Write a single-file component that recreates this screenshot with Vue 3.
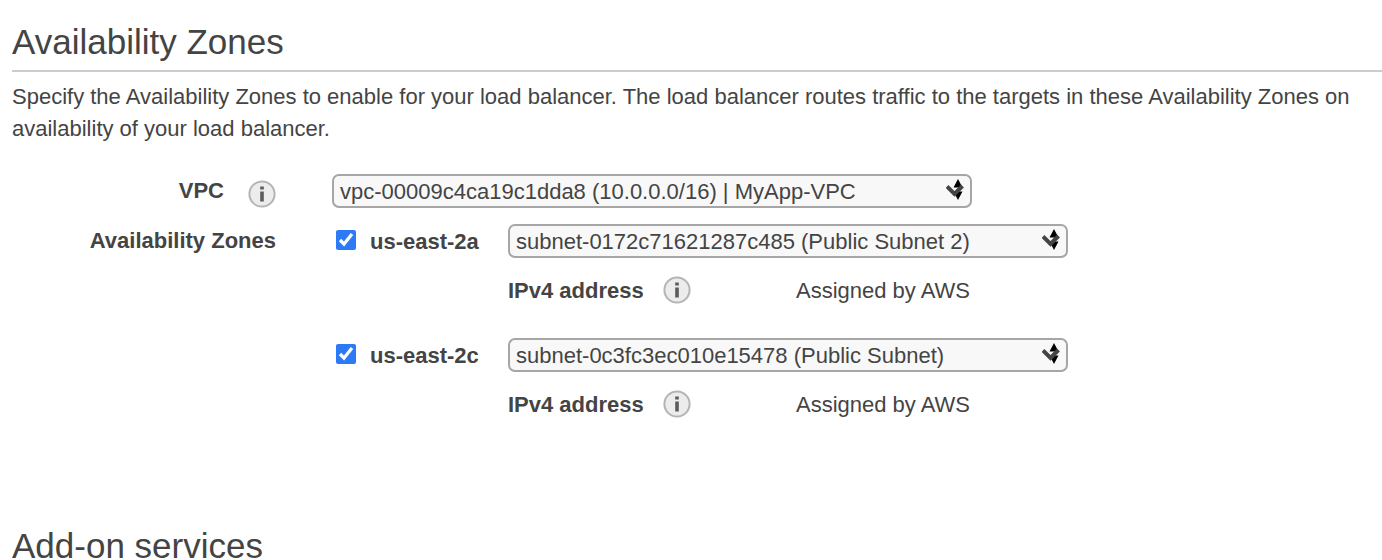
<script setup>
import { ref } from 'vue'

const vpc = ref('vpc-00009c4ca19c1dda8 (10.0.0.0/16) | MyApp-VPC')
const zones = ref([
  { name: 'us-east-2a', enabled: true, subnet: 'subnet-0172c71621287c485 (Public Subnet 2)' },
  { name: 'us-east-2c', enabled: true, subnet: 'subnet-0c3fc3ec010e15478 (Public Subnet)' }
])
</script>

<template>
  <main class="page">
    <section>
      <h2>Availability Zones</h2>
      <p class="intro">
        Specify the Availability Zones to enable for your load balancer. The load balancer routes traffic to the targets in these Availability Zones on<br>availability of your load balancer.
      </p>

      <div class="form">
        <div class="heading vpc-heading">
          <label for="vpc">VPC</label>
          <button class="info" type="button" aria-label="About VPC">
            <svg viewBox="0 0 28 28"><circle cx="14" cy="14" r="12.6" /><path d="M12.2 6.6h3.6v3h-3.6zM12.2 11.4h3.6v10h-3.6z" /></svg>
          </button>
        </div>
        <div class="picker vpc-picker">
          <select id="vpc" v-model="vpc"><option>{{ vpc }}</option></select>
          <svg class="arrows" viewBox="0 0 20 22"><path d="M12 0l4.5 8.5h-9zM12 21l4.5-8.500h-9z" /><path class="tick" d="M1 7.500l7.500 7.500 8-8" /></svg>
        </div>

        <div class="heading">Availability Zones</div>
        <div class="zones">
          <div v-for="zone in zones" :key="zone.name" class="zone">
            <label class="zone-name">
              <input v-model="zone.enabled" type="checkbox">
              <span>{{ zone.name }}</span>
            </label>
            <div class="picker subnet-picker">
              <select v-model="zone.subnet" :aria-label="zone.name"><option>{{ zone.subnet }}</option></select>
              <svg class="arrows" viewBox="0 0 20 22"><path d="M12 0l4.5 8.5h-9zM12 21l4.5-8.500h-9z" /><path class="tick" d="M1 7.500l7.500 7.500 8-8" /></svg>
            </div>
            <div class="address">
              <strong>IPv4 address</strong>
              <button class="info" type="button" aria-label="About IPv4 address">
                <svg viewBox="0 0 28 28"><circle cx="14" cy="14" r="12.6" /><path d="M12.2 6.6h3.6v3h-3.6zM12.2 11.4h3.6v10h-3.6z" /></svg>
              </button>
              <span class="assigned">Assigned by AWS</span>
            </div>
          </div>
        </div>
      </div>
    </section>
    <section class="addons">
      <h2>Add-on services</h2>
    </section>
  </main>
</template>

<style>
body { margin: 0; background: #fff; }
html { overflow: hidden; }
</style>

<style scoped>
.page {
  padding: 20px 0 0 12px;
  color: #444;
  font: 22px/32px "Liberation Sans", Arial, sans-serif;
}
h2 {
  margin: 0;
  padding-bottom: 6px;
  border-bottom: 2px solid #ccc;
  font-size: 35px;
  line-height: 44px;
  font-weight: 400;
}
.intro { margin: 9px 0 29px; white-space: nowrap; }
.form {
  display: grid;
  grid-template-columns: 264px 1fr;
  column-gap: 56px;
  row-gap: 16px;
  line-height: 34px;
}
.heading { font-weight: 700; text-align: right; }
.vpc-heading { display: flex; justify-content: flex-end; align-items: flex-end; gap: 24px; }
.info { width: 28px; height: 28px; padding: 0; border: 0; background: none; flex: none; }
.info svg { display: block; width: 28px; height: 28px; }
.info circle { fill: #ececec; stroke: #b4b4b4; stroke-width: 2; }
.info path { fill: #5c5c5c; }
.picker { position: relative; height: 34px; }
.vpc-picker { width: 640px; }
.subnet-picker { width: 560px; }
select {
  appearance: none;
  width: 100%;
  height: 34px;
  padding: 2px 40px 0 6px;
  border: 2px solid #a6a6a6;
  border-radius: 7px;
  background: #f8f8f8;
  color: #444;
  font: inherit;
  line-height: 28px;
}
.arrows { position: absolute; right: 6px; top: 5px; width: 20px; height: 22px; fill: #000; pointer-events: none; }
.arrows .tick { fill: none; stroke: #444; stroke-width: 4; }
.zones { display: grid; row-gap: 30px; }
.zone { display: grid; grid-template-columns: 176px 1fr; row-gap: 16px; }
.zone-name { display: flex; align-items: center; gap: 14px; font-weight: 700; }
.zone-name span { padding-top: 2px; line-height: 32px; }
.zone-name input { width: 20px; height: 20px; margin: 0 0 2px 4px; accent-color: #2d7af6; }
.address { grid-column: 2; display: flex; align-items: center; }
.address strong { width: 155px; }
.address .info { margin-bottom: 2px; }
.assigned { margin-left: 105px; }
.addons { margin-top: 102px; }
</style>
